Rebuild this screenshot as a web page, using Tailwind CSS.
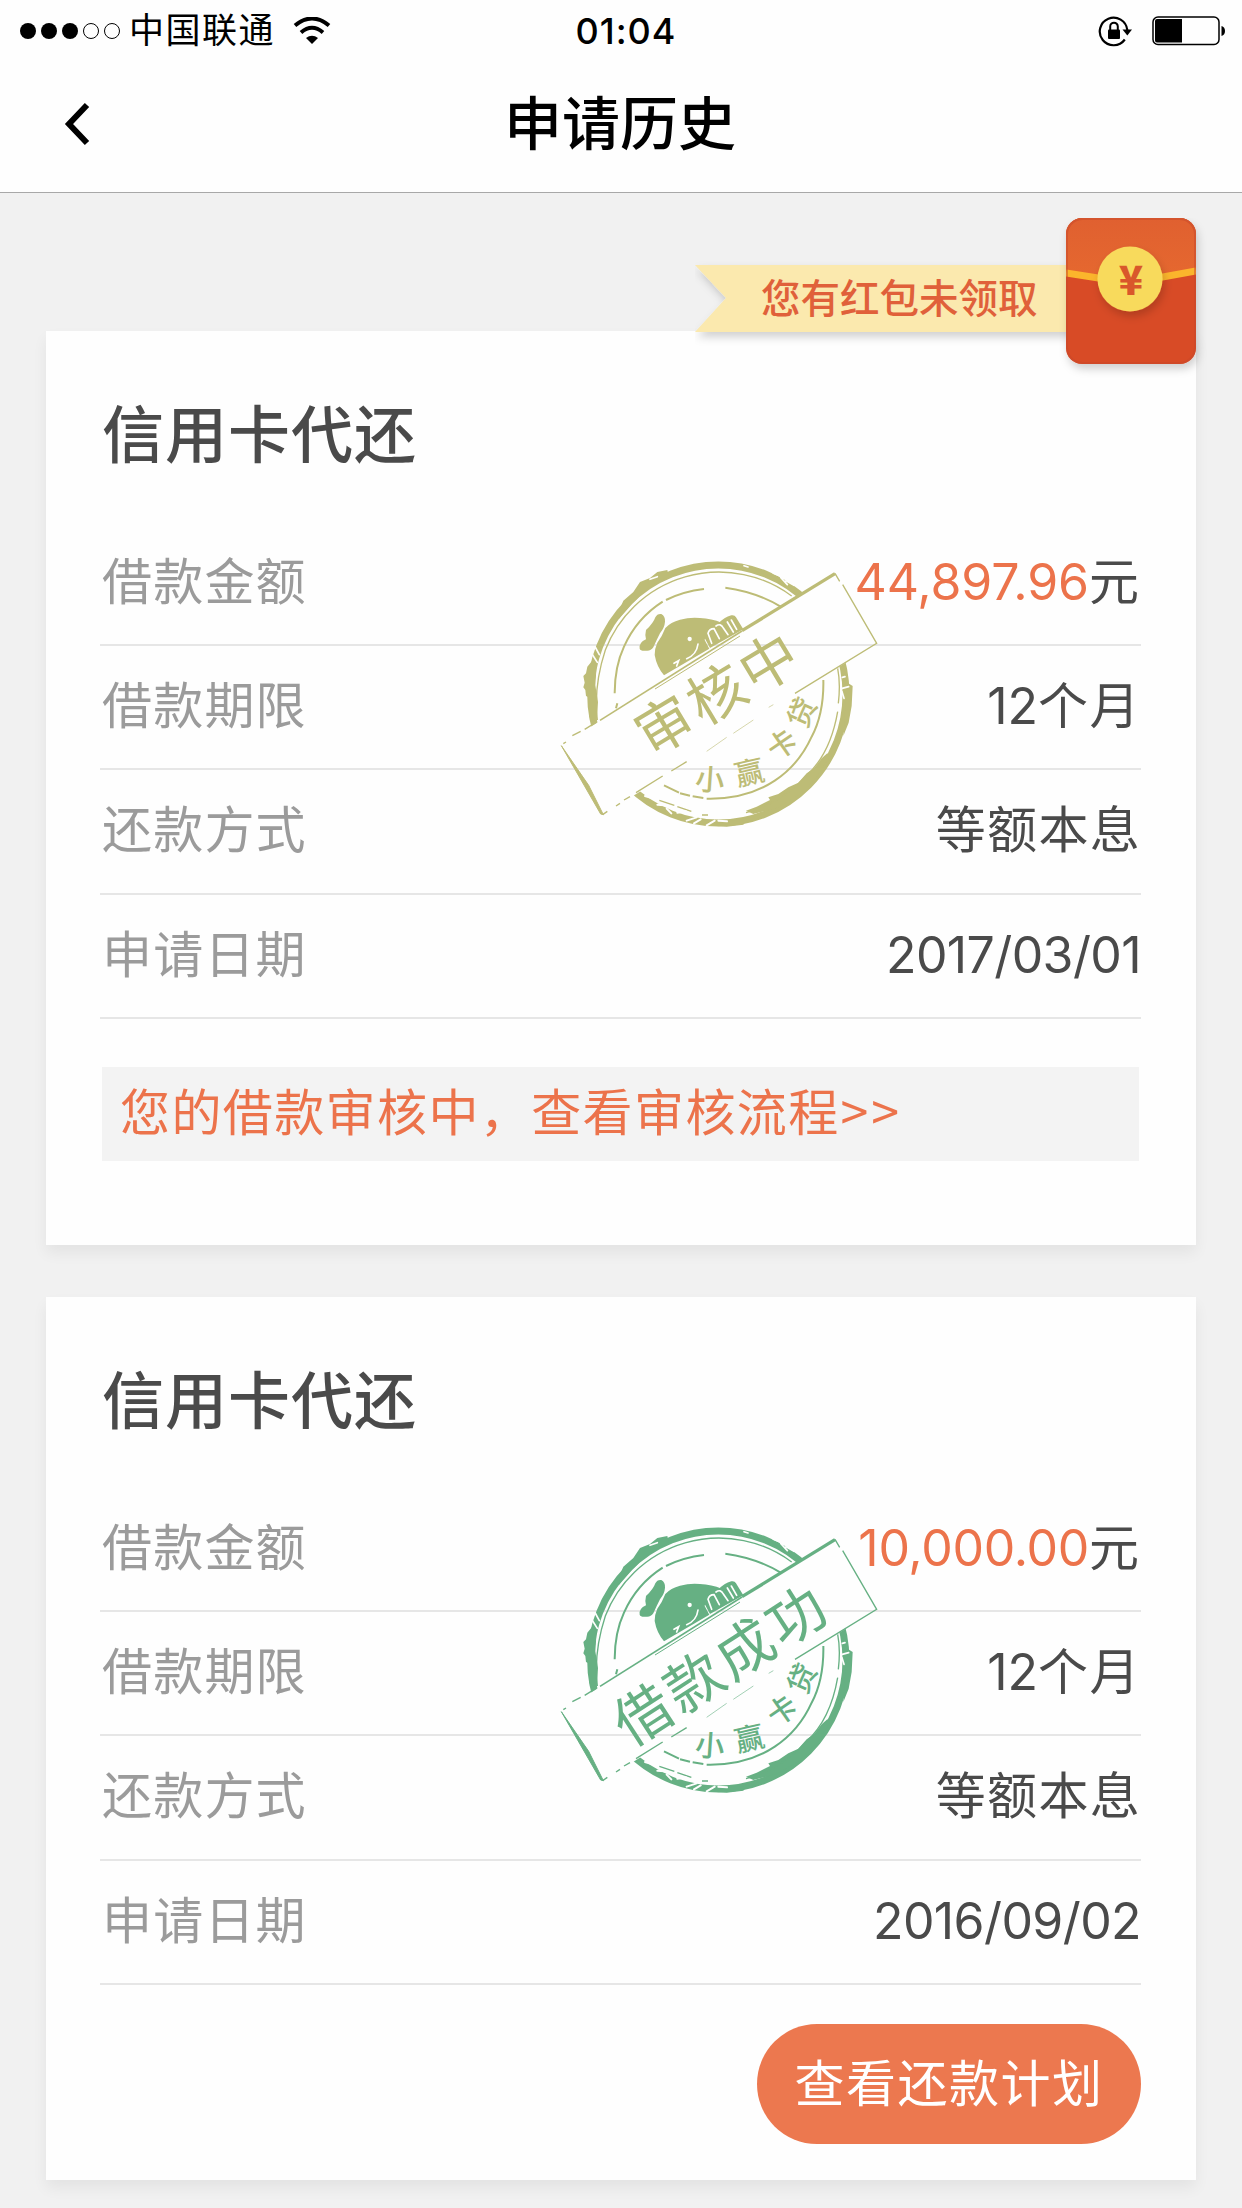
<!DOCTYPE html>
<html lang="zh-CN">
<head>
<meta charset="utf-8">
<title>申请历史</title>
<script src="https://cdn.jsdelivr.net/npm/@tailwindcss/browser@4"></script>
</head>
<body class="w-[1242px] h-[2208px] overflow-hidden bg-[#f1f1f1] font-[Inter,'Noto_Sans_CJK_SC',sans-serif] text-[#4a4a4a]">

<svg class="absolute w-0 h-0">
  <defs>
    <mask id="cut" maskUnits="userSpaceOnUse" x="0" y="0" width="1080" height="900">
      <rect width="1080" height="900" fill="#fff"/>
      <path d="M65 615 885 100 1010 310 188 825Z" fill="#000"/>
      <g stroke="#000" fill="none" stroke-linecap="round">
        <path stroke-width="5" d="M164 318l14 26M158 345l14 22M700 100l28 12M722 112l20 22M738 122l24 14M612 77l12 4M330 118l22-8M926 440l-22 6M915 410l-8 2M906 455l6 20"/>
        <path stroke-width="6" d="M315 768l20 6M352 794l22 2M380 806l14 14M412 818l26-4M440 842l30-10M462 850l20-12M500 856l24-14M535 842l26 2"/>
      </g>
    </mask>
    <symbol id="stamp" viewBox="0 0 1080 900">
      <g mask="url(#cut)" fill="none" stroke="currentColor">
        <ellipse cx="535" cy="462" rx="383" ry="387" stroke-width="21"/>
        <path fill="currentColor" stroke="none" d="M160 358l-18 22-4 20-8 8 4 20-4 14 6 8 2 18 8 4 2 60 22 14 4-60-8-50 4-60ZM238 210l12-28 30-26 20-30 30-12 22-18 30-6 4 18-60 34-50 50-40 46ZM862 640L845 655 822 685 800 700 775 728 745 742 715 762 685 772 690 780 650 800 618 812 640 822 715 802 775 766 830 711 870 650ZM925 430l13 8-3 60-9 50-16 40 6-90ZM480 842l20 14 60 4 50-6 10-14Z"/>
        <path stroke-width="4" d="M172 540Q160 440 196 330A366 366 0 0 1 755 168M893 385Q902 430 895 490M893 515C880 590 850 660 800 706C750 760 690 800 618 818M358 781l45 15M412 800l42 14M486 825h18"/>
        <path stroke-width="6" d="M228 505L232 490M224 460Q224 380 252 320Q290 235 368 185M378 180Q430 154 492 147M556 143Q650 156 722 200M850 420Q852 520 815 590C770 690 670 780 500 776M372 736l45 22M420 760l30 7M458 769l32 5"/>
      </g>
      <g fill="currentColor">
        <path d="M299 326Q296 308 318 298Q314 286 318 270Q340 250 346 232Q352 220 364 222Q376 228 375 245Q374 262 360 280Q350 300 340 322Q332 334 318 332Q302 334 299 326Z"/>
        <path d="M372 406Q350 380 344 345Q344 325 352 308Q366 290 376 264Q392 246 420 239Q450 231 480 234Q515 236 545 248L498 282L494 300L508 326Z"/>
        <path d="M510 324L492 290Q496 276 508 264Q516 252 536 250Q552 232 574 226Q584 224 588 232L610 268Z"/>
      </g>
      <g fill="none" stroke="#fff" stroke-width="5" stroke-linecap="round">
        <path d="M515 310l-11-30q4-14 18-14l16 30M528 258q14-10 22 6l14 20M562 246l18 30M574 240l16 28M474 312q-4 32-34 44M402 370l14-8-6 16"/>
        <circle cx="449" cy="297" r="4" fill="#fff"/>
      </g>
      <g fill="none" stroke="currentColor" stroke-width="4">
        <path stroke-width="10" d="M885 101L606 272"/>
        <path stroke-width="5" d="M606 273L180 541"/>
        <path stroke-width="3" d="M600 288L345 447"/>
        <path d="M168 547l-34 21M122 574l-25 13M78 606l-8 5M885 100l14 24M908 134L1010 310 765 460M440 665l-46 28M368 708l-80 50M270 770l-18 10M240 790l-12 8M202 814l-14 10"/>
        <path stroke-width="3" d="M640 540l-60 40M560 592l-60 42M700 494l-14 8" opacity=".6"/>
        <path fill="currentColor" stroke-width="3" d="M64 617l118 205 8 2-44-88Z"/>
      </g>
      <g fill="currentColor" font-family="'Noto Sans CJK SC'" font-size="88" font-weight="500" text-anchor="middle">
        <text transform="translate(510 718) rotate(4)" y="33">小</text>
        <text transform="translate(628 697) rotate(-13)" y="33">赢</text>
        <text transform="translate(725 612) rotate(-35)" y="33">卡</text>
        <text transform="translate(785 517) rotate(-66)" y="33">贷</text>
      </g>
    </symbol>
  </defs>
</svg>

<header class="h-[193px] bg-[#fefefe] border-b border-[#a8a8a8] text-black">
  <div class="h-[60px] grid grid-cols-3 items-center">
    <div class="flex items-center pl-[20px]">
      <svg class="w-[101px] h-[18px]" viewBox="0 0 101 18">
        <circle cx="8" cy="9" r="8"/><circle cx="29" cy="9" r="8"/><circle cx="50" cy="9" r="8"/>
        <g fill="none" stroke="#000"><circle cx="71" cy="9" r="7.500"/><circle cx="92" cy="9" r="7.500"/></g>
      </svg>
      <span class="ml-[8px] text-[35px] leading-[58px] tracking-[1.500px] -mt-[2px]">中国联通</span>
      <svg class="ml-[18px] w-[38px] h-[28px]" viewBox="0 0 38 28">
        <g fill="none" stroke="#000" stroke-width="4"><path d="M2 8.500Q19-5.500 36 8.500M8 15.500Q19 6 30 15.500"/></g>
        <path d="M13 21Q19 16.500 25 21L19 27Z"/>
      </svg>
    </div>
    <div class="text-center text-[36px] leading-[60px] tracking-[1px] font-medium pl-[10px] pt-[1px]">01:04</div>
    <div class="flex items-center justify-end pr-[16px] gap-[18px]">
      <svg class="w-[36px] h-[32px]" viewBox="0 0 36 32">
        <path d="M26.800 24.500A13.800 13.800 0 1 1 29.300 15" fill="none" stroke="#000" stroke-width="2.200"/>
        <path d="M24.500 14.500h9.500l-4.700 6Z"/><rect x="10" y="14.500" width="12" height="9.500" rx="1"/>
        <path d="M12.200 15v-3.500a3.800 3.800 0 0 1 7.600 0V15" fill="none" stroke="#000" stroke-width="2"/>
      </svg>
      <svg class="w-[74px] h-[30px]" viewBox="0 0 74 30">
        <rect x="1" y="1" width="66" height="27.500" rx="5" fill="none" stroke="#000" stroke-width="1.500"/>
        <path d="M5 3h25v23.500H5q-2 0-2-2V5q0-2 2-2ZM69.500 10q3.500 1 3.500 5t-3.500 5Z"/>
      </svg>
    </div>
  </div>
  <div class="h-[132px] grid grid-cols-3 items-center">
    <svg class="ml-[63px] w-[30px] h-[46px] -mt-[5px]" viewBox="0 0 30 46"><path d="M24 4L6 23 24 42" fill="none" stroke="#000" stroke-width="6"/></svg>
    <h1 class="text-center whitespace-nowrap text-[58px] leading-[100px] font-medium -mt-[4px] -ml-[2px]">申请历史</h1>
  </div>
</header>

<main class="relative pt-[138px] px-[46px] flex flex-col gap-[52px]">

  <section class="relative h-[914px] bg-[#fefefe] shadow-[0_8px_14px_rgba(0,0,0,0.06)] pl-[54px] pr-[55px]">
    <h2 class="h-[191px] pt-[55px] pl-[2px] text-[62px] leading-[100px] tracking-[1px] font-medium">信用卡代还</h2>
    <dl class="text-[50px] leading-[121px]">
      <div class="h-[124.200px] flex justify-between border-b-2 border-[#e6e6e6] pl-[2px]"><dt class="tracking-[1.200px] text-[#9b9b9b]">借款金额</dt><dd class="flex pr-[2px]"><span class="text-[#ec734b] -tracking-[0.100px]">44,897.96</span><span>元</span></dd></div>
      <div class="h-[124.200px] flex justify-between border-b-2 border-[#e6e6e6] pl-[2px]"><dt class="tracking-[1.200px] text-[#9b9b9b]">借款期限</dt><dd><span>12</span><span class="tracking-[1.500px]">个月</span></dd></div>
      <div class="h-[124.200px] flex justify-between border-b-2 border-[#e6e6e6] pl-[2px]"><dt class="tracking-[1.200px] text-[#9b9b9b]">还款方式</dt><dd class="tracking-[1.300px]">等额本息</dd></div>
      <div class="h-[124.200px] flex justify-between border-b-2 border-[#e6e6e6] pl-[2px]"><dt class="tracking-[1.200px] text-[#9b9b9b]">申请日期</dt><dd class="-tracking-[0.600px]">2017/03/01</dd></div>
    </dl>
    <a class="block mt-[48px] ml-[2px] mr-[2px] h-[94px] bg-[#f3f3f3] pl-[18px] text-[50px] leading-[84px] tracking-[1.400px] text-[#ec734b]">您的借款审核中，查看审核流程<span class="font-['Noto_Sans_CJK_SC'] tracking-[3px] pl-[1px]">&gt;&gt;</span></a>
    <svg class="absolute left-[494px] top-[209px] w-[360px] h-[300px] text-[#bdbc76]" viewBox="0 0 1080 900">
      <use href="#stamp" width="1080" height="900"/>
      <text transform="translate(534 460) rotate(-31)" y="62" text-anchor="middle" font-family="'Noto Sans CJK SC'" font-size="172" letter-spacing="10" fill="currentColor">审核中</text>
    </svg>
  </section>

  <section class="relative h-[883px] bg-[#fefefe] shadow-[0_8px_14px_rgba(0,0,0,0.06)] pl-[54px] pr-[55px]">
    <h2 class="h-[191px] pt-[55px] pl-[2px] text-[62px] leading-[100px] tracking-[1px] font-medium">信用卡代还</h2>
    <dl class="text-[50px] leading-[121px]">
      <div class="h-[124.200px] flex justify-between border-b-2 border-[#e6e6e6] pl-[2px]"><dt class="tracking-[1.200px] text-[#9b9b9b]">借款金额</dt><dd class="flex pr-[2px]"><span class="text-[#ec734b] -tracking-[0.300px]">10,000.00</span><span>元</span></dd></div>
      <div class="h-[124.200px] flex justify-between border-b-2 border-[#e6e6e6] pl-[2px]"><dt class="tracking-[1.200px] text-[#9b9b9b]">借款期限</dt><dd><span>12</span><span class="tracking-[1.500px]">个月</span></dd></div>
      <div class="h-[124.200px] flex justify-between border-b-2 border-[#e6e6e6] pl-[2px]"><dt class="tracking-[1.200px] text-[#9b9b9b]">还款方式</dt><dd class="tracking-[1.300px]">等额本息</dd></div>
      <div class="h-[124.200px] flex justify-between border-b-2 border-[#e6e6e6] pl-[2px]"><dt class="tracking-[1.200px] text-[#9b9b9b]">申请日期</dt><dd class="-tracking-[0.600px]">2016/09/02</dd></div>
    </dl>
    <div class="flex justify-end mt-[39px]">
      <button class="w-[384px] h-[120px] rounded-full bg-[#ec784f] text-white text-[50px] leading-[118px] tracking-[1.500px]">查看还款计划</button>
    </div>
    <svg class="absolute left-[494px] top-[209px] w-[360px] h-[300px] text-[#66b083]" viewBox="0 0 1080 900">
      <use href="#stamp" width="1080" height="900"/>
      <text transform="translate(543 476) rotate(-33)" y="62" text-anchor="middle" font-family="'Noto Sans CJK SC'" font-size="172" letter-spacing="10" fill="currentColor">借款成功</text>
    </svg>
  </section>

  <div class="absolute left-[695px] top-[25px] w-[520px] h-[166px]">
    <svg class="absolute inset-0 w-[520px] h-[166px]" viewBox="0 0 520 166">
      <defs>
        <linearGradient id="flap" x2="0" y2="1"><stop stop-color="#e06030"/><stop offset="1" stop-color="#e6692f"/></linearGradient>
        <filter id="soft" x="-20%" y="-20%" width="140%" height="150%"><feDropShadow dx="2" dy="5" stdDeviation="4" flood-color="#000" flood-opacity=".18"/></filter>
        <clipPath id="env"><rect x="371" width="130" height="146" rx="16"/></clipPath>
      </defs>
      <path filter="url(#soft)" d="M0 47H376V114H0L31 80Z" fill="#fbe9ae"/>
      <g filter="url(#soft)"><rect x="371" width="130" height="146" rx="16" fill="#d84c27"/></g>
      <g clip-path="url(#env)">
        <path d="M371 0H501V55L436 68 371 57Z" fill="url(#flap)"/>
        <path d="M371 55L435 65 501 53" fill="none" stroke="#fbb52c" stroke-width="7"/>
        <rect x="371.500" y=".5" width="129" height="145" rx="16" fill="none" stroke="#c8472a" stroke-width="3" opacity=".5"/>
      </g>
      <circle cx="435" cy="61" r="32.500" fill="#f8da5c" filter="url(#soft)"/>
      <text x="436" y="77" text-anchor="middle" font-family="'Noto Sans CJK SC'" font-weight="900" font-size="40" fill="#d9572b">¥</text>
    </svg>
    <span class="absolute left-[66px] top-[51px] text-[39.500px] leading-[60px] text-[#e0603a] font-medium">您有红包未领取</span>
  </div>
</main>
</body>
</html>
